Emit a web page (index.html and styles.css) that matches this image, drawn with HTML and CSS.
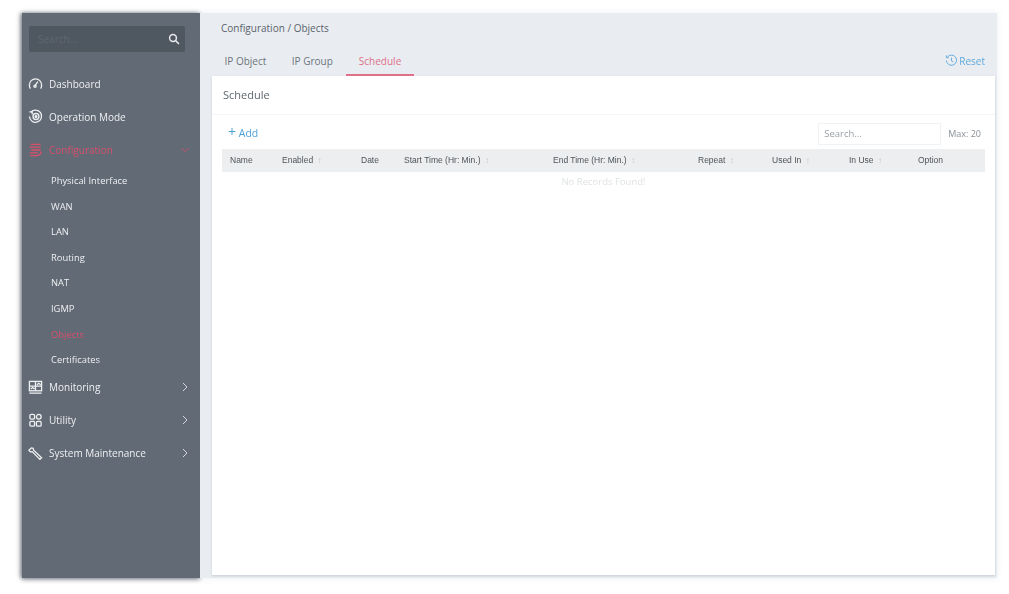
FILE: index.html
```html
<!DOCTYPE html>
<html lang="en">
<head>
<meta charset="utf-8">
<title>Configuration / Objects</title>
<link rel="stylesheet" href="styles.css">
</head>
<body>
<div class="window">
  <aside class="sidebar">
    <div class="side-search">
      <span class="side-search-text">Search...</span>
      <svg class="side-search-icon" viewBox="0 0 12 12"><circle cx="5" cy="5" r="3.4"/><path d="M7.6 7.6 11 11"/></svg>
    </div>
    <nav class="nav">
      <a class="nav-item">
        <svg class="nav-icon" viewBox="0 0 16 16"><path d="M2.500 13.500A7 7 0 0 1 1.500 9.500a6.500 6.500 0 0 1 13 0 7 7 0 0 1-1 4"/><path d="M7 11 10.500 6"/><circle cx="7.500" cy="11" r="1.200"/></svg>
        <span>Dashboard</span>
      </a>
      <a class="nav-item">
        <svg class="nav-icon" viewBox="0 0 16 16"><path d="M3 3.500A6.500 6.500 0 1 1 1.500 8"/><path d="M1.500 3h3v2.500"/><circle cx="8.500" cy="8" r="3.200"/><circle cx="8.500" cy="8" r="1" class="fill"/></svg>
        <span>Operation Mode</span>
      </a>
      <a class="nav-item active">
        <svg class="nav-icon" viewBox="0 0 16 16"><path d="M3 2.500h10.500M1.500 5.500h12M3.500 8.500h10M1.500 11.500h9M13.500 10v2.500l-3 2h-8"/></svg>
        <span>Configuration</span>
        <svg class="nav-arrow" viewBox="0 0 10 10"><path d="M1.500 3 5 6.500 8.500 3"/></svg>
      </a>
      <div class="subnav">
        <a class="sub-item">Physical Interface</a>
        <a class="sub-item">WAN</a>
        <a class="sub-item">LAN</a>
        <a class="sub-item">Routing</a>
        <a class="sub-item">NAT</a>
        <a class="sub-item">IGMP</a>
        <a class="sub-item active">Objects</a>
        <a class="sub-item">Certificates</a>
      </div>
      <a class="nav-item">
        <svg class="nav-icon" viewBox="0 0 16 16"><rect x="1.500" y="1.500" width="13" height="10"/><path d="M1.500 6.500h13M8 1.500v10M3 9.500l2-1.500 2 1.500M9.500 5l2-1.500 2 1.500M1.500 14h13"/></svg>
        <span>Monitoring</span>
        <svg class="nav-arrow" viewBox="0 0 10 10"><path d="M3 1 7 5 3 9"/></svg>
      </a>
      <a class="nav-item">
        <svg class="nav-icon" viewBox="0 0 16 16"><rect x="2" y="1.500" width="5" height="5" rx="1.500"/><rect x="9" y="1.500" width="5" height="5" rx="2.500"/><rect x="2" y="9" width="5" height="5" rx="1"/><rect x="9" y="9" width="5" height="5" rx="1"/></svg>
        <span>Utility</span>
        <svg class="nav-arrow" viewBox="0 0 10 10"><path d="M3 1 7 5 3 9"/></svg>
      </a>
      <a class="nav-item">
        <svg class="nav-icon" viewBox="0 0 16 16"><path d="M1 4.500 3.500 2l2 .5.500 2 8.500 8-1.800 1.800-8.200-8.300-2 .3z"/></svg>
        <span>System Maintenance</span>
        <svg class="nav-arrow" viewBox="0 0 10 10"><path d="M3 1 7 5 3 9"/></svg>
      </a>
    </nav>
  </aside>
  <main class="main">
    <div class="breadcrumb">Configuration / Objects</div>
    <div class="tabbar">
      <a class="tab">IP Object</a>
      <a class="tab">IP Group</a>
      <a class="tab active">Schedule</a>
      <a class="reset">
        <svg class="reset-icon" viewBox="0 0 14 14"><path d="M2.500 3.500A5.500 5.500 0 1 1 1.500 7"/><path d="M1.500 1.500v2.500H4"/><path d="M7 4v3.500l2 1"/></svg>Reset
      </a>
    </div>
    <section class="card">
      <h2 class="card-title">Schedule</h2>
      <div class="toolbar">
        <a class="add"><span class="plus">+</span> Add</a>
        <div class="toolbar-right">
          <div class="search">Search...</div>
          <span class="max">Max: 20</span>
        </div>
      </div>
      <div class="table-head">
        <span>Name</span>
        <span>Enabled <i class="sort">↕</i></span>
        <span>Date</span>
        <span>Start Time (Hr: Min.) <i class="sort">↕</i></span>
        <span>End Time (Hr: Min.) <i class="sort">↕</i></span>
        <span>Repeat <i class="sort">↕</i></span>
        <span>Used In <i class="sort">↕</i></span>
        <span>In Use <i class="sort">↕</i></span>
        <span>Option</span>
      </div>
      <div class="empty">No Records Found!</div>
    </section>
  </main>
</div>
</body>
</html>
```

FILE: styles.css
```css
* { box-sizing: border-box; }
html, body { margin: 0; height: 100%; }
body {
  background: #fff;
  font-family: "Open Sans", sans-serif;
  overflow: hidden;
}
.window {
  display: flex;
  height: 565px;
  margin: 13px 12px 0 22px;
  filter: blur(0.5px);
  box-shadow: 0 0 6px rgba(190, 198, 205, 0.3);
}
.sidebar {
  width: 178px;
  flex: none;
  background: #626a75;
  box-shadow: -2px 0 4px rgba(70, 78, 90, 0.5), 0 2px 4px rgba(70, 78, 90, 0.4), 0 -1px 3px rgba(70, 78, 90, 0.2);
  padding: 13px 0 0 0;
}
.side-search {
  margin: 0 15px 0 7px;
  height: 26px;
  background: #4f5761;
  border-radius: 2px;
  display: flex;
  align-items: center;
  justify-content: space-between;
  padding: 0 5px 0 9px;
}
.side-search-text { font-size: 10px; color: #5f6771; }
.side-search-icon { width: 12px; height: 12px; fill: none; stroke: #e8eaec; stroke-width: 1.500; }
.nav { margin-top: 15px; }
.nav-item {
  display: flex;
  align-items: center;
  height: 33px;
  padding: 0 10px 0 6px;
  color: #eef0f2;
  font-size: 10px;
}
.nav-item span { flex: 1; margin-left: 6px; }
.nav-item.active { color: #d8506c; }
.nav-icon { width: 15px; height: 15px; fill: none; stroke: currentColor; stroke-width: 1.400; flex: none; }
.nav-icon .fill { fill: currentColor; }
.nav-arrow { width: 10px; height: 10px; fill: none; stroke: #d5d8dc; stroke-width: 1; flex: none; }
.nav-item.active .nav-arrow { stroke: #c9506a; }
.subnav { display: flex; flex-direction: column; padding: 0 0 0 29px; }
.sub-item { height: 25.600px; padding-top: 4px; line-height: 21.600px; font-size: 9.400px; color: #eef0f2; }
.sub-item.active { color: #d8506c; }
.main {
  flex: 1;
  min-width: 0;
  background: #e9edf1;
  display: flex;
  flex-direction: column;
  padding-left: 12px;
  padding-right: 2px;
  padding-bottom: 3px;
}
.breadcrumb { font-size: 10px; color: #5a626b; padding: 8px 0 0 9px; line-height: 15px; height: 23px; }
.tabbar {
  display: flex;
  align-items: stretch;
  height: 40px;
  font-size: 10px;
  color: #6c747c;
}
.tab { padding: 18px 13px 0 12.500px; line-height: 15px; }
.tab.active { color: #e0708a; border-bottom: 2px solid #e0708a; height: 40px; padding-left: 13px; }
.reset {
  margin-left: auto;
  padding: 18px 10px 0 0;
  line-height: 15px;
  color: #5fa8dc;
  display: flex;
  align-items: flex-start;
}
.reset-icon { width: 13px; height: 13px; fill: none; stroke: #5fa8dc; stroke-width: 1; margin-right: 1px; }
.card {
  flex: 1;
  background: #fff;
  box-shadow: 0 1px 2px rgba(170, 178, 185, 0.5);
  display: flex;
  flex-direction: column;
  padding: 0 10px;
}
.card-title {
  margin: 0 -10px;
  padding: 0 11px;
  height: 39px;
  line-height: 38px;
  font-size: 11px;
  font-weight: 400;
  color: #5f666e;
  border-bottom: 1px solid #f3f5f6;
}
.toolbar {
  display: flex;
  align-items: center;
  justify-content: space-between;
  height: 34px;
  padding: 3px 4px 0 6px;
}
.add { font-size: 10.500px; color: #4d9fd8; margin-bottom: 2px; }
.plus { font-size: 14px; line-height: 10px; }
.toolbar-right { display: flex; align-items: center; gap: 7px; }
.search {
  width: 123px;
  height: 22px;
  border: 1px solid #f0f2f3;
  font-size: 9.500px;
  line-height: 20px;
  padding: 0 5px;
  color: #9aa0a6;
}
.max { font-size: 9px; color: #8a9096; }
.table-head {
  display: grid;
  grid-template-columns: 52px 79px 43px 149px 145px 74px 77px 69px 1fr;
  align-items: center;
  height: 23px;
  padding-left: 8px;
  padding-bottom: 1px;
  background: #eceeef;
  font-family: "Liberation Sans", Arial, sans-serif;
  font-size: 8.500px;
  color: #4e545a;
}
.sort { font-style: normal; color: #c9cdd0; font-size: 8px; margin-left: 2px; }
.empty { text-align: center; font-size: 9.500px; color: #dfe2e4; padding-top: 3px; line-height: 14px; }
```
